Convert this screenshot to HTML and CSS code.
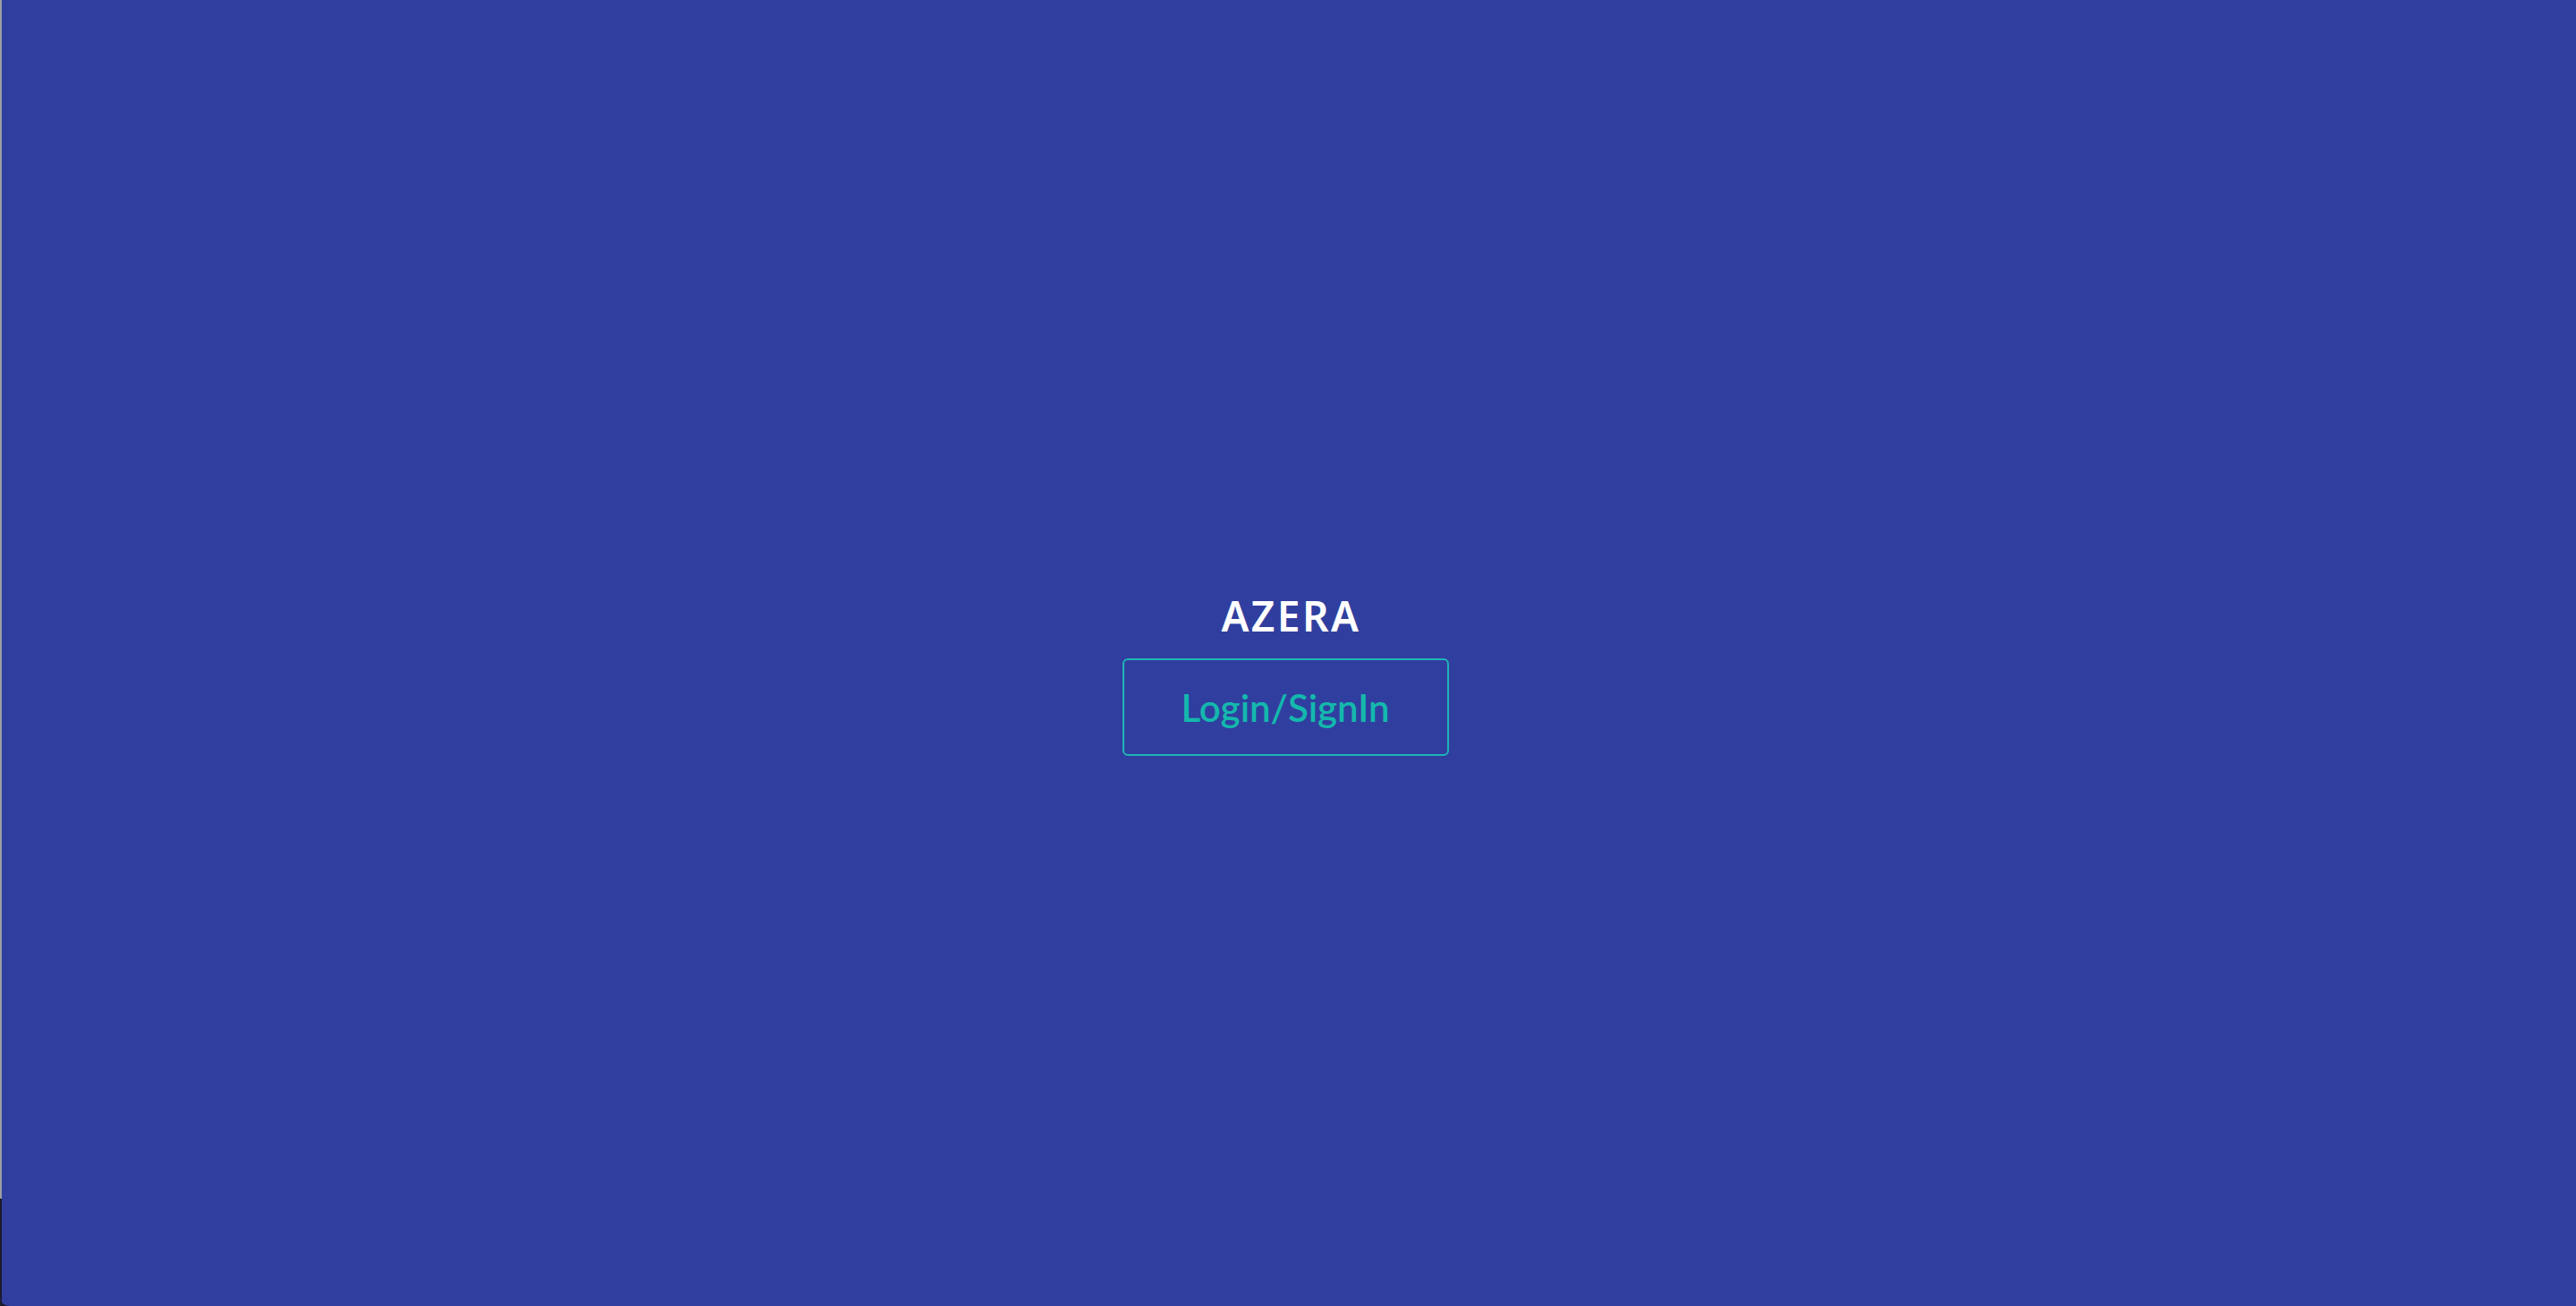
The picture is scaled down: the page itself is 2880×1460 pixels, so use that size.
FILE: index.html
```html
<!DOCTYPE html>
<html lang="en">
<head>
<meta charset="utf-8">
<title>Azera</title>
<link rel="stylesheet" href="styles.css">
</head>
<body>
<div class="page">
  <div class="edge"></div>
  <main class="main">
    <div class="logo">AZERA</div>
    <button class="login" type="button">Login/SignIn</button>
  </main>
</div>
</body>
</html>
```
FILE: styles.css
```css
html, body {
  margin: 0;
  padding: 0;
  background: #1c1b2b;
}
.page {
  display: flex;
  height: 1460px;
  width: 2880px;
  background: #303f9f;
  border-bottom-left-radius: 10px;
  overflow: hidden;
}
.edge {
  width: 2px;
  flex: 0 0 2px;
  background: linear-gradient(#9c9ea4 0, #9c9ea4 1340px, #1c1b2b 1340px);
}
.main {
  flex: 1;
  display: flex;
  flex-direction: column;
  align-items: center;
  padding-top: 668px;
  box-sizing: border-box;
}
.logo {
  font-family: "Noto Sans", "DejaVu Sans", sans-serif;
  font-weight: 600;
  font-size: 46px;
  line-height: 40px;
  letter-spacing: 2.5px;
  color: #ffffff;
  margin-left: 5px;
}
.login {
  margin-top: 28px;
  margin-right: 8px;
  width: 365px;
  height: 109px;
  box-sizing: border-box;
  border: 2px solid #1fb4b8;
  border-radius: 6px;
  background: transparent;
  color: #14b8ad;
  font-family: Lato, "Open Sans", sans-serif;
  font-size: 42px;
  font-weight: 600;
  display: flex;
  align-items: center;
  justify-content: center;
  padding: 0;
  cursor: pointer;
}
```
